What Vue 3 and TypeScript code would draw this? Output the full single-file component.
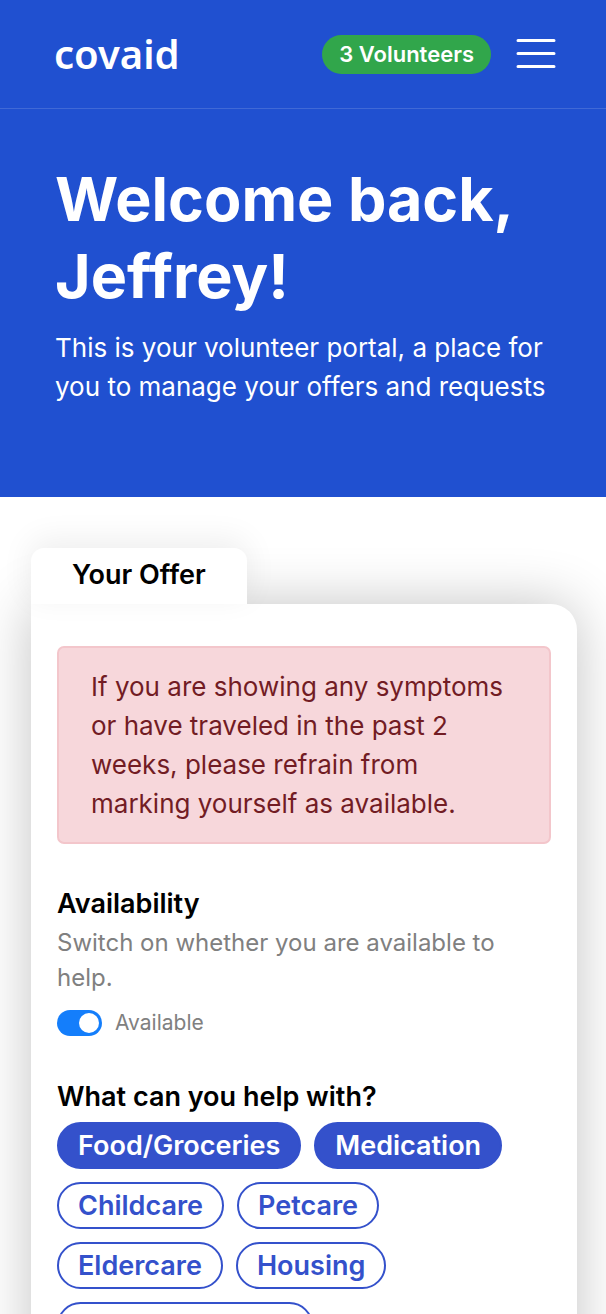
<script setup lang="ts">
import { ref } from 'vue'

interface HelpOption {
  label: string
  selected: boolean
}

const volunteerCount = 3
const firstName = 'Jeffrey'
const available = ref(true)
const options = ref<HelpOption[]>([
  { label: 'Food/Groceries', selected: true },
  { label: 'Medication', selected: true },
  { label: 'Childcare', selected: false },
  { label: 'Petcare', selected: false },
  { label: 'Eldercare', selected: false },
  { label: 'Housing', selected: false },
  { label: 'Internet Support', selected: false },
])
</script>

<template>
  <div class="page">
    <header class="navbar">
      <a class="brand" href="#">covaid</a>
      <div class="nav-actions">
        <button class="volunteers" type="button">{{ volunteerCount }} Volunteers</button>
        <button class="menu" type="button" aria-label="Menu">
          <svg viewBox="0 0 40 30" width="40" height="30" fill="none" stroke="#fff" stroke-width="3" stroke-linecap="round">
            <path d="M2 1.5H38M2 14.5H38M2 27.5H38" />
          </svg>
        </button>
      </div>
    </header>

    <section class="hero">
      <h1>Welcome back, {{ firstName }}!</h1>
      <p>This is your volunteer portal, a place for you to manage your offers and requests</p>
    </section>

    <main class="portal">
      <button class="tab" type="button">Your Offer</button>
      <div class="card">
        <div class="alert" role="alert">
          If you are showing any symptoms or have traveled in the past 2 weeks, please refrain from marking yourself as available.
        </div>

        <section class="group">
          <h2>Availability</h2>
          <p class="hint">Switch on whether you are available to help.</p>
          <label class="switch">
            <input v-model="available" type="checkbox" />
            <span>Available</span>
          </label>
        </section>

        <section class="group">
          <h2>What can you help with?</h2>
          <div class="chips">
            <button
              v-for="option in options"
              :key="option.label"
              type="button"
              class="chip"
              :class="{ selected: option.selected }"
              :aria-pressed="option.selected"
              @click="option.selected = !option.selected"
            >
              {{ option.label }}
            </button>
          </div>
        </section>
      </div>
    </main>
  </div>
</template>

<style>
body {
  margin: 0;
  background: #fff;
}
</style>

<style scoped>
.page {
  font-family: Inter, "Liberation Sans", sans-serif;
  color: #000;
}

button {
  font-family: inherit;
  cursor: pointer;
}

.navbar {
  display: flex;
  align-items: center;
  justify-content: space-between;
  box-sizing: border-box;
  height: 109px;
  padding: 0 50px 0 54px;
  background: #2050d0;
  border-bottom: 1px solid #4069d6;
}

.brand {
  color: #fff;
  font-family: "Noto Sans", sans-serif;
  font-size: 40px;
  font-weight: 600;
  line-height: 56px;
  text-decoration: none;
}

.nav-actions {
  display: flex;
  align-items: center;
  gap: 25px;
}

.volunteers {
  height: 39px;
  padding: 0 17px;
  border: 0;
  border-radius: 20px;
  background: #31a64b;
  color: #fff;
  font-size: 22px;
  font-weight: 600;
}

.menu {
  display: flex;
  padding: 0;
  border: 0;
  background: none;
}

.hero {
  padding: 52px 48px 91px 55px;
  background: #2050d0;
  color: #fff;
}

h1 {
  margin: 0;
  font-size: 61px;
  font-weight: 700;
  line-height: 77px;
}

.hero p {
  margin: 13px 0 0;
  font-size: 26px;
  line-height: 39px;
}

.portal {
  padding: 51px 29px 0 31px;
}

.tab {
  position: relative;
  display: block;
  height: 56px;
  padding: 0 41px 3px;
  border: 0;
  border-radius: 13px 13px 0 0;
  background: #fff;
  box-shadow: 0 -8px 32px rgba(0, 0, 0, 0.07);
  color: #000;
  font-size: 27px;
  font-weight: 600;
}

.card {
  padding: 42px 26px;
  border-radius: 0 26px 26px 26px;
  background: #fff;
  box-shadow: 0 0 56px rgba(0, 0, 0, 0.24);
}

.alert {
  padding: 19px 32px;
  border: 2px solid #f3c6cb;
  border-radius: 7px;
  background: #f7d7db;
  color: #721c24;
  font-size: 26px;
  line-height: 39px;
}

.group {
  margin-top: 40px;
}

h2 {
  margin: 0;
  font-size: 27px;
  font-weight: 600;
  line-height: 39px;
}

.hint {
  margin: 2px 0 0;
  color: #808080;
  font-size: 24px;
  line-height: 35px;
}

.switch {
  display: flex;
  align-items: center;
  gap: 13px;
  margin-top: 14px;
  color: #808080;
  font-size: 21px;
  line-height: 28px;
}

.switch input {
  appearance: none;
  display: flex;
  box-sizing: border-box;
  width: 45px;
  height: 26px;
  margin: 0;
  padding: 3px;
  border-radius: 13px;
  background: #adb5bd;
}

.switch input::before {
  content: "";
  width: 20px;
  height: 20px;
  border-radius: 50%;
  background: #fff;
}

.switch input:checked {
  justify-content: flex-end;
  background: #147efb;
}

.chips {
  display: flex;
  flex-wrap: wrap;
  gap: 13px;
  margin-top: 6px;
}

.chip {
  height: 47px;
  padding: 0 19px;
  border: 2px solid #3451cb;
  border-radius: 24px;
  background: #fff;
  color: #3451cb;
  font-size: 27px;
  font-weight: 600;
}

.chip.selected {
  background: #3451cb;
  color: #fff;
}
</style>
